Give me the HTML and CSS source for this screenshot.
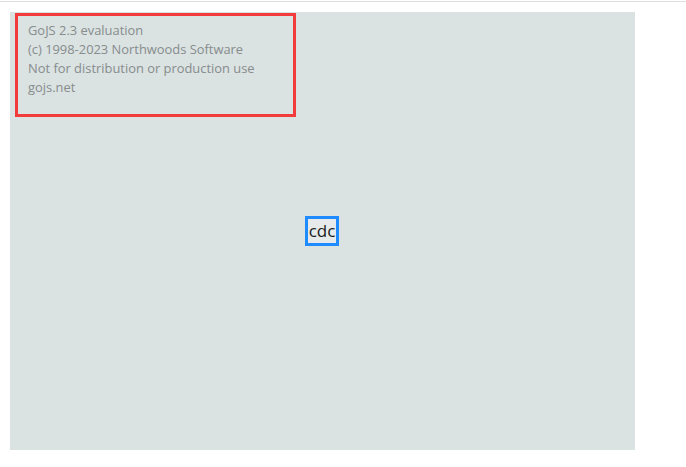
FILE: index.html
```html
<!DOCTYPE html>
<html>
<head>
<meta charset="utf-8">
<link rel="stylesheet" href="styles.css">
</head>
<body>
<div class="topline"></div>
<div class="diagram">
  <div class="watermark">
    <div>GoJS 2.3 evaluation</div>
    <div>(c) 1998-2023 Northwoods Software</div>
    <div>Not for distribution or production use</div>
    <div>gojs.net</div>
  </div>
  <div class="highlight"></div>
  <div class="node">cdc</div>
</div>
</body>
</html>
```
FILE: styles.css
```css
html, body {
  margin: 0;
  padding: 0;
  background: #ffffff;
}
.topline {
  margin-top: 1px;
  height: 1px;
  background: #dedede;
}
.diagram {
  position: relative;
  margin: 10px 0 0 10px;
  width: 625px;
  height: 438px;
  background: #dae2e2;
  overflow: hidden;
}
.watermark {
  position: absolute;
  left: 18px;
  top: 9px;
  font-family: "Open Sans", "Noto Sans", sans-serif;
  font-size: 12.9px;
  line-height: 19px;
  color: #878c8c;
}
.highlight {
  position: absolute;
  left: 5px;
  top: 1px;
  width: 275px;
  height: 98px;
  border: 3px solid #f23b3b;
}
.node {
  position: absolute;
  left: 295px;
  top: 204px;
  width: 28px;
  height: 24px;
  border: 3px solid #1e8cff;
  background: #e6eaea;
  font-family: "Open Sans", "Noto Sans", sans-serif;
  font-size: 17px;
  line-height: 23px;
  text-align: center;
  color: #1a1a1a;
}
```
